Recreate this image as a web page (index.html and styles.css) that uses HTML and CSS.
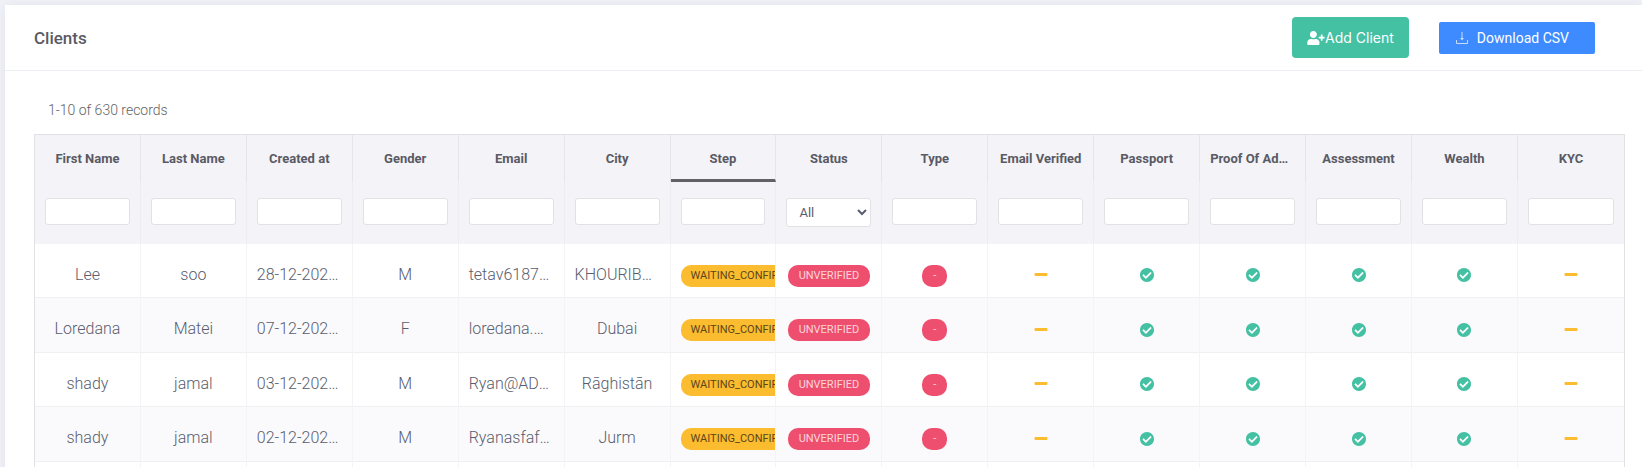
FILE: index.html
```html
<!DOCTYPE html>
<html lang="en">
<head>
<meta charset="utf-8">
<title>Clients</title>
<link rel="stylesheet" href="styles.css">
</head>
<body>
<svg class="sprite" aria-hidden="true">
  <symbol id="i-check" viewBox="8 8 496 496"><path d="M504 256c0 136.967-111.033 248-248 248S8 392.967 8 256 119.033 8 256 8s248 111.033 248 248zM227.314 387.314l184-184c6.248-6.248 6.248-16.379 0-22.627l-22.627-22.627c-6.248-6.249-16.379-6.249-22.628 0L216 308.118l-70.059-70.059c-6.248-6.248-16.379-6.248-22.628 0l-22.627 22.627c-6.248 6.248-6.248 16.379 0 22.627l104 104c6.249 6.249 16.379 6.249 22.628.001z"/></symbol>
  <symbol id="i-minus" viewBox="0 0 14 14"><rect x=".5" y="5" width="13" height="3" rx="1"/></symbol>
  <symbol id="i-user-plus" viewBox="0 0 640 512"><path d="M624 208h-64v-64c0-8.800-7.200-16-16-16h-32c-8.800 0-16 7.200-16 16v64h-64c-8.800 0-16 7.200-16 16v32c0 8.800 7.200 16 16 16h64v64c0 8.800 7.200 16 16 16h32c8.800 0 16-7.200 16-16v-64h64c8.800 0 16-7.200 16-16v-32c0-8.800-7.200-16-16-16zm-400 48c70.700 0 128-57.300 128-128S294.700 0 224 0 96 57.300 96 128s57.300 128 128 128zm89.600 32h-16.700c-22.200 10.200-46.900 16-72.900 16s-50.600-5.800-72.900-16h-16.700C60.200 288 0 348.200 0 422.400V464c0 26.500 21.500 48 48 48h352c26.500 0 48-21.500 48-48v-41.600c0-74.200-60.200-134.400-134.400-134.400z"/></symbol>
  <symbol id="i-download" viewBox="0 0 12 12"><path d="M.5 8v3.500h11V8" fill="none" stroke="currentColor"/><path d="M5.500 0h1v6H8L6 8.500 4 6h1.500z"/></symbol>
</svg>
<main class="card">
  <header class="card-head">
    <h1 class="title">Clients</h1>
    <div class="actions">
      <button type="button" class="btn btn-add"><svg class="icon-user"><use href="#i-user-plus"/></svg>Add Client</button>
      <button type="button" class="btn btn-download"><svg class="icon-download"><use href="#i-download"/></svg>Download CSV</button>
    </div>
  </header>
  <section class="card-body">
    <p class="summary">1-10 of 630 records</p>
    <table class="grid">
      <thead>
        <tr class="labels">
          <th scope="col">First Name</th><th scope="col">Last Name</th><th scope="col">Created at</th><th scope="col">Gender</th><th scope="col">Email</th><th scope="col">City</th><th scope="col" class="sorted">Step</th><th scope="col">Status</th><th scope="col">Type</th><th scope="col">Email Verified</th><th scope="col">Passport</th><th scope="col">Proof Of Address</th><th scope="col">Assessment</th><th scope="col">Wealth</th><th scope="col">KYC</th>
        </tr>
        <tr class="filters">
          <td><input class="field" type="text" aria-label="First Name"></td>
          <td><input class="field" type="text" aria-label="Last Name"></td>
          <td><input class="field" type="text" aria-label="Created at"></td>
          <td><input class="field" type="text" aria-label="Gender"></td>
          <td><input class="field" type="text" aria-label="Email"></td>
          <td><input class="field" type="text" aria-label="City"></td>
          <td><input class="field" type="text" aria-label="Step"></td>
          <td><select class="field field-select" aria-label="Status"><option>All</option></select></td>
          <td><input class="field" type="text" aria-label="Type"></td>
          <td><input class="field" type="text" aria-label="Email Verified"></td>
          <td><input class="field" type="text" aria-label="Passport"></td>
          <td><input class="field" type="text" aria-label="Proof Of Address"></td>
          <td><input class="field" type="text" aria-label="Assessment"></td>
          <td><input class="field" type="text" aria-label="Wealth"></td>
          <td><input class="field" type="text" aria-label="KYC"></td>
        </tr>
      </thead>
      <tbody>
        <tr>
          <td>Lee</td><td>soo</td><td>28-12-2021 10</td><td>M</td><td>tetav61875@</td><td>KHOURIBGA</td>
          <td class="cut"><span class="badge wait">WAITING_CONFIRM</span></td><td class="cut"><span class="badge bad">UNVERIFIED</span></td><td class="cut"><span class="badge bad">-</span></td>
          <td class="state"><svg class="mark no"><use href="#i-minus"/></svg></td><td class="state"><svg class="mark yes"><use href="#i-check"/></svg></td><td class="state"><svg class="mark yes"><use href="#i-check"/></svg></td><td class="state"><svg class="mark yes"><use href="#i-check"/></svg></td><td class="state"><svg class="mark yes"><use href="#i-check"/></svg></td><td class="state"><svg class="mark no"><use href="#i-minus"/></svg></td>
        </tr>
        <tr>
          <td>Loredana</td><td>Matei</td><td>07-12-2021 10</td><td>F</td><td>loredana.matei</td><td>Dubai</td>
          <td class="cut"><span class="badge wait">WAITING_CONFIRM</span></td><td class="cut"><span class="badge bad">UNVERIFIED</span></td><td class="cut"><span class="badge bad">-</span></td>
          <td class="state"><svg class="mark no"><use href="#i-minus"/></svg></td><td class="state"><svg class="mark yes"><use href="#i-check"/></svg></td><td class="state"><svg class="mark yes"><use href="#i-check"/></svg></td><td class="state"><svg class="mark yes"><use href="#i-check"/></svg></td><td class="state"><svg class="mark yes"><use href="#i-check"/></svg></td><td class="state"><svg class="mark no"><use href="#i-minus"/></svg></td>
        </tr>
        <tr>
          <td>shady</td><td>jamal</td><td>03-12-2021 10</td><td>M</td><td>Ryan@ADmail</td><td>Rāghistān</td>
          <td class="cut"><span class="badge wait">WAITING_CONFIRM</span></td><td class="cut"><span class="badge bad">UNVERIFIED</span></td><td class="cut"><span class="badge bad">-</span></td>
          <td class="state"><svg class="mark no"><use href="#i-minus"/></svg></td><td class="state"><svg class="mark yes"><use href="#i-check"/></svg></td><td class="state"><svg class="mark yes"><use href="#i-check"/></svg></td><td class="state"><svg class="mark yes"><use href="#i-check"/></svg></td><td class="state"><svg class="mark yes"><use href="#i-check"/></svg></td><td class="state"><svg class="mark no"><use href="#i-minus"/></svg></td>
        </tr>
        <tr>
          <td>shady</td><td>jamal</td><td>02-12-2021 10</td><td>M</td><td>Ryanasfaf@mail</td><td>Jurm</td>
          <td class="cut"><span class="badge wait">WAITING_CONFIRM</span></td><td class="cut"><span class="badge bad">UNVERIFIED</span></td><td class="cut"><span class="badge bad">-</span></td>
          <td class="state"><svg class="mark no"><use href="#i-minus"/></svg></td><td class="state"><svg class="mark yes"><use href="#i-check"/></svg></td><td class="state"><svg class="mark yes"><use href="#i-check"/></svg></td><td class="state"><svg class="mark yes"><use href="#i-check"/></svg></td><td class="state"><svg class="mark yes"><use href="#i-check"/></svg></td><td class="state"><svg class="mark no"><use href="#i-minus"/></svg></td>
        </tr>
        <tr>
          <td></td><td></td><td></td><td></td><td></td><td></td><td></td><td></td><td></td><td></td><td></td><td></td><td></td><td></td><td></td>
        </tr>
      </tbody>
    </table>
  </section>
</main>
</body>
</html>
```
FILE: styles.css
```css
* { box-sizing: border-box; }
body {
  margin: 0;
  padding: 5px 0 0 5px;
  background: #f2f3f8;
  color: #595d6e;
  font-family: Roboto, "Liberation Sans", sans-serif;
  font-size: 16px;
  font-weight: 300;
  overflow: hidden;
}
.sprite { position: absolute; width: 0; height: 0; }
svg { fill: currentColor; }

.card {
  background: #fff;
  box-shadow: 0 0 13px rgba(82, 63, 105, 0.1);
}
.card-head {
  display: flex;
  align-items: center;
  justify-content: space-between;
  min-height: 66px;
  padding: 0 47px 0 29px;
  border-bottom: 1px solid #ebedf2;
}
.title { margin: 0; color: #5a5a64; font-size: 17px; font-weight: 500; }
.actions { display: flex; align-items: center; gap: 30px; }
.btn {
  display: flex;
  align-items: center;
  border: 0;
  color: #fff;
  white-space: nowrap;
}
.btn-add {
  height: 41px;
  padding: 0 15px;
  border-radius: 4px;
  background: #44c0a3;
  font: 400 14px Inter, sans-serif;
}
.icon-user { width: 18px; height: 14px; }
.btn-download {
  height: 32px;
  padding: 0 26px 0 17px;
  gap: 9px;
  border-radius: 2px;
  background: #3d8bff;
  font: 400 14px Roboto, sans-serif;
}
.icon-download { width: 12px; height: 12px; opacity: 0.7; }

.card-body { padding: 30px 17px 0 29px; }
.summary { margin: 0 0 15px 14px; font-size: 14px; line-height: 18px; color: #646464; }

.grid {
  width: 100%;
  table-layout: fixed;
  border-collapse: separate;
  border-spacing: 0;
  border: 1px solid #e1e1e4;
}
.grid th, .grid td {
  overflow: hidden;
  padding: 0 10px;
  border-right: 1px solid #f4f4f6;
  text-align: center;
  text-overflow: ellipsis;
  white-space: nowrap;
}
.grid th:last-child, .grid td:last-child { border-right: 0; }
.grid thead { background: #f3f3f8; }
.labels th {
  height: 47px;
  border-right-color: #e6e6ea;
  color: #5a5a64;
  font-size: 13px;
  font-weight: 700;
}
.labels .sorted { border-bottom: 3px solid #626266; padding-top: 3px; }
.grid .filters td { height: 62px; padding-top: 16px; vertical-align: top; border-right-color: #eeeef2; }
.field {
  display: block;
  width: 100%;
  height: 27px;
  padding: 3px 8px;
  border: 1px solid #e2e2e4;
  border-radius: 3px;
  background: #fff;
  color: #595d6e;
  font: 400 13px Roboto, sans-serif;
}
.field-select { height: 29px; }
.grid tbody td {
  height: 54px;
  padding-top: 7px;
  border-bottom: 1px solid #f0f0f2;
}
.grid tbody tr:nth-child(even) td { height: 55px; }
.grid tbody tr:nth-child(even) { background: #fafafc; }
.grid tbody .cut { padding-top: 10px; text-overflow: clip; }
.grid tbody .state { padding-top: 9px; }
.badge {
  display: inline-block;
  padding: 0 10px;
  border-radius: 10px;
  font-size: 11px;
  font-weight: 400;
  line-height: 22px;
  vertical-align: middle;
}
.wait { background: #fbbc30; color: #5c4618; }
.bad { padding: 0 11px; background: #ef4f6e; color: #fbd5dc; }
.mark { display: block; width: 14px; height: 14px; margin: 0 auto; }
.yes { color: #44c0a3; }
.no { color: #fbbc30; }
```
